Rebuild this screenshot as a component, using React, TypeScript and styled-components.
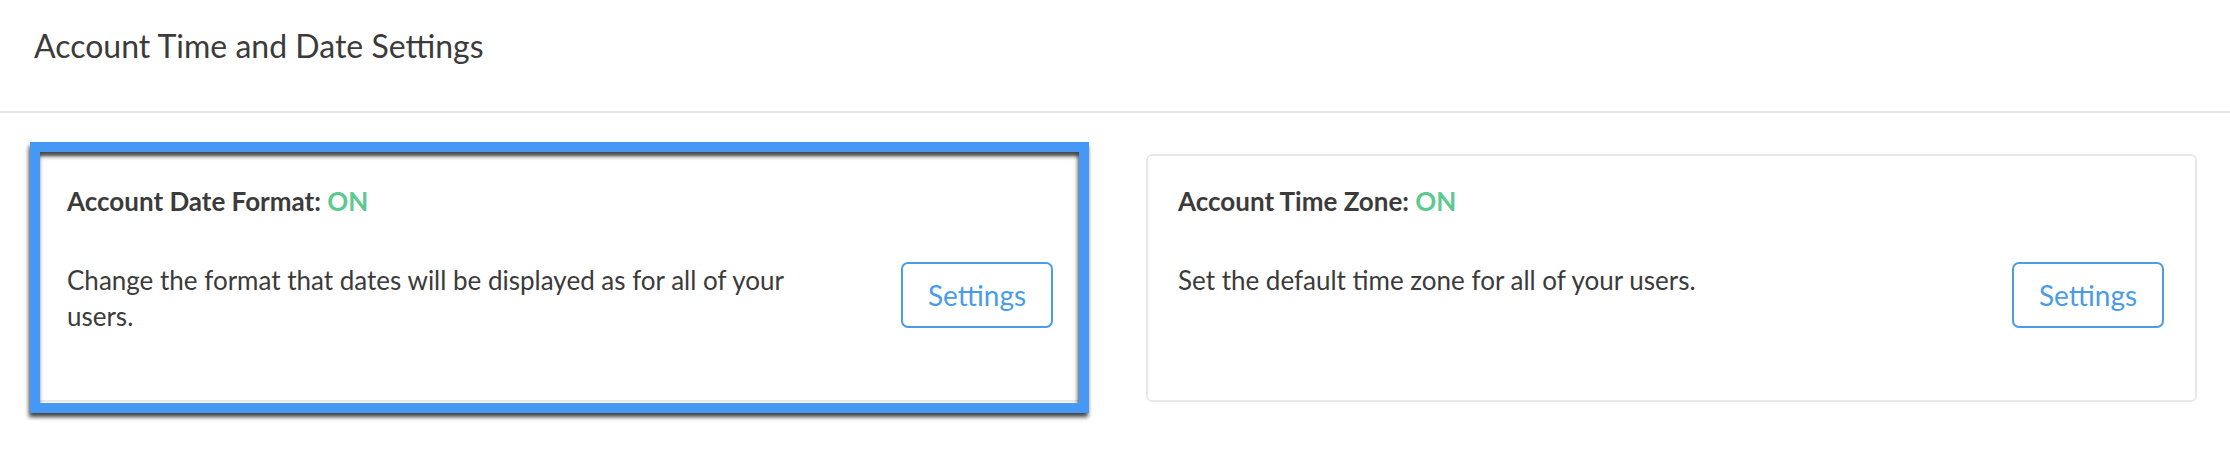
import React from "react";
import styled, { createGlobalStyle } from "styled-components";

const Global = createGlobalStyle`
  html, body { margin: 0; padding: 0; background: #ffffff; }
  body { font-family: Lato, "Open Sans", Arial, sans-serif; color: #3b3b3b; }
  * { box-sizing: border-box; }
`;

const Page = styled.div`
  width: 2230px;
  min-height: 460px;
  background: #ffffff;
`;

const Header = styled.header`
  height: 113px;
  padding: 24px 34px 0;
  border-bottom: 2px solid #e6e6e6;
`;

const PageTitle = styled.h1`
  margin: 0;
  font-size: 32px;
  line-height: 44px;
  font-weight: 400;
  color: #3b3b3b;
`;

const Grid = styled.main`
  display: grid;
  grid-template-columns: 1fr 1fr;
  column-gap: 60px;
  padding: 41px 33px 0 35px;
  align-items: stretch;
`;

const Card = styled.section`
  position: relative;
  border: 2px solid #e8e8e8;
  border-radius: 6px;
  padding: 27px 31px 28px 30px;
  background: #ffffff;
`;

const Highlight = styled.div`
  position: absolute;
  top: -14px;
  left: -7px;
  right: -5px;
  bottom: -13px;
  border: 10px solid #4599f5;
  pointer-events: none;
  filter: drop-shadow(-1px 4px 2px rgba(0, 0, 0, 0.75));
`;

const CardTitle = styled.h2`
  margin: 0 0 43px;
  font-size: 26px;
  line-height: 36px;
  font-weight: 700;
  color: #3b3b3b;
`;

const Status = styled.span`
  color: #5cc98f;
`;

const Row = styled.div`
  display: flex;
  align-items: flex-start;
  justify-content: space-between;
  gap: 40px;
`;

const Description = styled.p<{ $maxWidth: number }>`
  margin: 0 0 38px;
  max-width: ${(p) => p.$maxWidth}px;
  font-size: 26px;
  line-height: 36px;
  color: #3b3b3b;
`;

const SettingsButton = styled.button`
  flex: none;
  width: 152px;
  height: 66px;
  border: 2px solid #4a9ce6;
  border-radius: 7px;
  background: #ffffff;
  color: #4a9ce6;
  font-family: inherit;
  font-size: 28px;
  line-height: 1;
  padding: 0;
  cursor: pointer;
`;

type Setting = {
  title: string;
  description: string;
  highlighted?: boolean;
};

const settings: Setting[] = [
  {
    title: "Account Date Format:",
    description:
      "Change the format that dates will be displayed as for all of your users.",
    highlighted: true,
  },
  {
    title: "Account Time Zone:",
    description: "Set the default time zone for all of your users.",
  },
];

export default function App() {
  return (
    <Page>
      <Global />
      <Header>
        <PageTitle>Account Time and Date Settings</PageTitle>
      </Header>
      <Grid>
        {settings.map((s) => (
          <Card key={s.title}>
            {s.highlighted && <Highlight />}
            <CardTitle>
              {s.title} <Status>ON</Status>
            </CardTitle>
            <Row>
              <Description $maxWidth={760}>{s.description}</Description>
              <SettingsButton>Settings</SettingsButton>
            </Row>
          </Card>
        ))}
      </Grid>
    </Page>
  );
}
